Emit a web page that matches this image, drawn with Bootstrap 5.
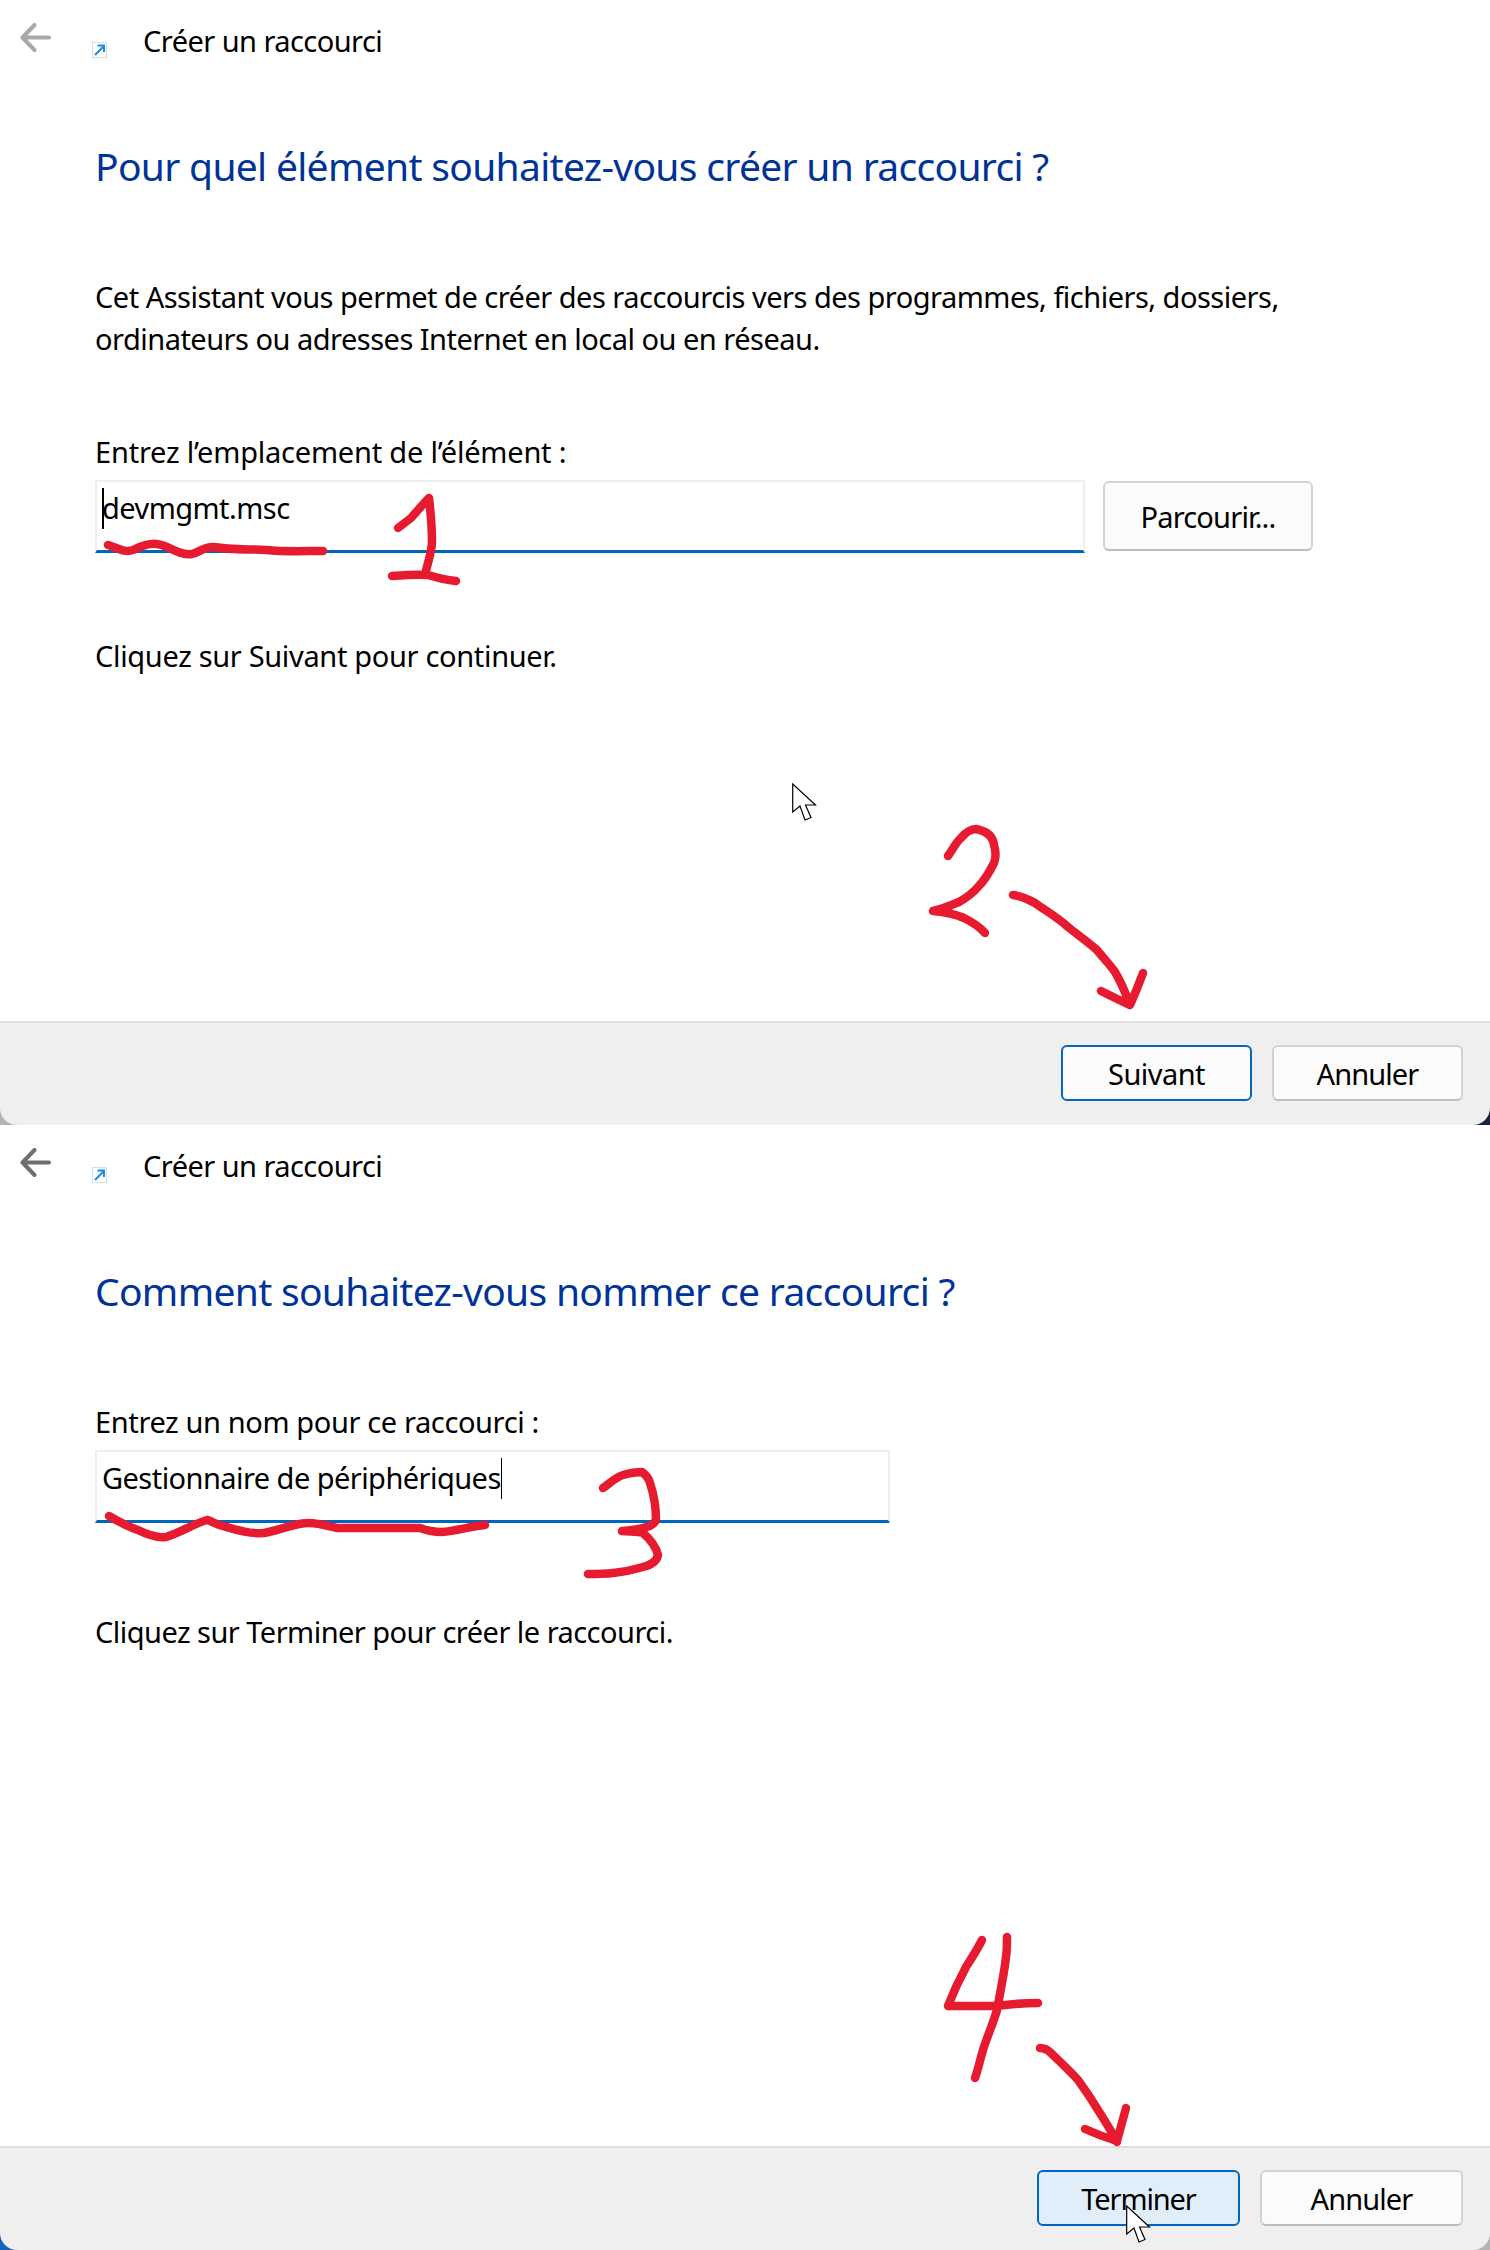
<!doctype html>
<html lang="fr">
<head>
<meta charset="utf-8">
<title>Créer un raccourci</title>
<link href="https://cdn.jsdelivr.net/npm/bootstrap@5.3.0/dist/css/bootstrap.min.css" rel="stylesheet">
<style>
html,body{margin:0;background:#fff}
body{font-family:"Noto Sans","Open Sans","Liberation Sans",sans-serif;color:#000;font-size:29px;line-height:42px;letter-spacing:-.55px;width:1490px}
.wiz-panel{height:1125px;background:linear-gradient(to right,#b4b4b4 50%,#17233f 50%)}
.wiz-panel.wiz-last{background:linear-gradient(to right,#1565c0 50%,#b4b4b4 50%)}
.wiz-main{background:#fff}
.wiz-head{height:82px}
.wiz-arrow{margin-left:20px;margin-top:-7px;width:31px;height:29px;flex:none}
.wiz-sc{margin-left:41px;margin-top:18px;width:15px;height:16px;flex:none}
.wiz-title{margin-left:36px;line-height:42px;margin-top:-1px}
.wiz-body{padding-left:95px}
.wiz-h{font-size:39px;line-height:56px;margin:56px 0 82px;color:#003399;font-weight:400;letter-spacing:-.69px}
.wiz-p{margin:0;letter-spacing:-.51px}
.wiz-lbl{display:block;margin:0 0 7px;padding:0}
.wiz-lbl-a{margin-top:71px;letter-spacing:-.21px}
.wiz-lbl-b{letter-spacing:-.38px}
.wiz-end-a{margin-top:82px;letter-spacing:-.33px}
.wiz-end-b{margin-top:88px;letter-spacing:-.53px}
.wiz-input{height:73px;border:2px solid #eeeeee;border-bottom:3px solid #0067c0;border-radius:0;padding:4.5px 5px 0;background:#fff;font-size:29px;line-height:42px;color:#000;box-shadow:none}
.wiz-input-a{width:990px}
.wiz-input-b{width:795px}
.wiz-caret{display:inline-block;width:1.5px;height:41px;background:#000;vertical-align:-10px;margin:0 -1.5px 0 0}
.wiz-btn{font-size:29px;line-height:42px;color:#000;border-radius:6px;background:#fbfbfb;border:2px solid #d2d2d2;border-bottom-color:#bdbdbd;padding:2px 0 0;letter-spacing:-.55px;height:56px;display:flex;align-items:center;justify-content:center}
.wiz-btn:hover{color:#000;background:#fbfbfb}
.wiz-browse{width:210px;height:70px;margin:1px 0 0 18px;letter-spacing:-.8px}
.wiz-foot{height:104px;background:#efefef;border-top:2px solid #dfdfdf;border-radius:0 0 17px 17px;padding:22px 27px 0 0}
.wiz-primary{border-color:#0067c0;border-bottom-color:#0067c0}
.wiz-w1{width:191px}
.wiz-w2{width:203px}
.wiz-tight{letter-spacing:-.9px}
.wiz-tighter{letter-spacing:-1.1px}
.wiz-hover,.wiz-hover:hover{background:#e0eef9}
.wiz-gap-a{gap:20px}
.wiz-ink{position:absolute;left:0;top:0;width:1490px;height:1125px;pointer-events:none}
.wiz-ink path{fill:none;stroke:#e61b30;stroke-width:8.5;stroke-linecap:round;stroke-linejoin:round}
.wiz-cur{position:absolute;pointer-events:none;width:25px;height:39px}
.wiz-cur-a{left:792px;top:783px}
.wiz-cur-b{left:1126px;top:1080px}
</style>
</head>
<body>
<section class="wiz-panel position-relative d-flex flex-column">
  <div class="wiz-main flex-grow-1">
    <div class="wiz-head d-flex align-items-center">
      <svg class="wiz-arrow" viewBox="0 0 31 29"><path d="M29 14.5H3M14.5 2 2.5 14.5 14.5 27" fill="none" stroke="#a8a8a8" stroke-width="4" stroke-linecap="round" stroke-linejoin="round"/></svg>
      <svg class="wiz-sc" viewBox="0 0 15 16"><rect x=".5" y=".5" width="14" height="15" fill="#fff" stroke="#d5dfe8"/><path d="M3 13 12 4M5.5 3.500H12V10" fill="none" stroke="#1a8ce8" stroke-width="2"/></svg>
      <div class="wiz-title">Créer un raccourci</div>
    </div>
    <div class="wiz-body">
      <h1 class="wiz-h">Pour quel élément souhaitez-vous créer un raccourci ?</h1>
      <p class="wiz-p">Cet Assistant vous permet de créer des raccourcis vers des programmes, fichiers, dossiers,<br>ordinateurs ou adresses Internet en local ou en réseau.</p>
      <label class="wiz-lbl wiz-lbl-a">Entrez l’emplacement de l’élément :</label>
      <div class="d-flex align-items-start">
        <div class="form-control wiz-input wiz-input-a"><span class="wiz-caret"></span>devmgmt.msc</div>
        <button type="button" class="btn wiz-btn wiz-browse">Parcourir...</button>
      </div>
      <p class="wiz-p wiz-end-a">Cliquez sur Suivant pour continuer.</p>
    </div>
  </div>
  <div class="wiz-foot d-flex justify-content-end wiz-gap-a">
    <button type="button" class="btn wiz-btn wiz-primary wiz-w1">Suivant</button>
    <button type="button" class="btn wiz-btn wiz-w1 wiz-tight">Annuler</button>
  </div>
  <svg class="wiz-ink" viewBox="0 0 1490 1125">
    <path d="M108 545C118 548 124 553 133 550C141 546 149 543 157 544C170 546 180 556 192 554C200 552 205 546 214 547C230 550 250 549 266 550C285 552 305 551 323 551"/>
    <path d="M398 528L411 518C419 509 424 503 429 498C431 515 432 530 432 543C431 555 427 565 425 575M392 576C405 575 418 574 428 575C438 578 447 580 456 581"/>
    <path d="M948 856C953 849 956 842 961 838C966 832 971 829 976 829C986 831 993 836 994 845C996 852 996 858 994 863C989 873 984 881 978 887C972 894 966 898 959 902C951 905 943 909 933 911C945 912 955 914 964 918C972 922 979 926 985 933"/>
    <path d="M1013 895C1020 896 1028 899 1035 903C1046 911 1057 917 1068 927C1078 935 1087 941 1097 950C1105 960 1111 966 1115 972C1121 982 1126 994 1130 1005M1101 991C1111 996 1121 1001 1130 1005C1135 994 1139 984 1143 973"/>
  </svg>
  <svg class="wiz-cur wiz-cur-a" viewBox="0 0 25 39"><path d="M.7 1V29L8 23 13 37 19 34.500 13.500 22H23.500Z" fill="#fff" stroke="#000" stroke-width="1.200"/></svg>
</section>
<section class="wiz-panel wiz-last position-relative d-flex flex-column">
  <div class="wiz-main flex-grow-1">
    <div class="wiz-head d-flex align-items-center">
      <svg class="wiz-arrow" viewBox="0 0 31 29"><path d="M29 14.5H3M14.5 2 2.5 14.5 14.5 27" fill="none" stroke="#6e6e6e" stroke-width="4" stroke-linecap="round" stroke-linejoin="round"/></svg>
      <svg class="wiz-sc" viewBox="0 0 15 16"><rect x=".5" y=".5" width="14" height="15" fill="#fff" stroke="#d5dfe8"/><path d="M3 13 12 4M5.5 3.500H12V10" fill="none" stroke="#1a8ce8" stroke-width="2"/></svg>
      <div class="wiz-title">Créer un raccourci</div>
    </div>
    <div class="wiz-body">
      <h1 class="wiz-h">Comment souhaitez-vous nommer ce raccourci ?</h1>
      <label class="wiz-lbl wiz-lbl-b">Entrez un nom pour ce raccourci :</label>
      <div class="form-control wiz-input wiz-input-b">Gestionnaire de périphériques<span class="wiz-caret"></span></div>
      <p class="wiz-p wiz-end-b">Cliquez sur Terminer pour créer le raccourci.</p>
    </div>
  </div>
  <div class="wiz-foot d-flex justify-content-end wiz-gap-a">
    <button type="button" class="btn wiz-btn wiz-primary wiz-hover wiz-w2 wiz-tighter">Terminer</button>
    <button type="button" class="btn wiz-btn wiz-w2 wiz-tight">Annuler</button>
  </div>
  <svg class="wiz-ink" viewBox="0 0 1490 1125">
    <path d="M109 391C118 396 128 402 138 405C148 410 157 413 166 412C180 408 195 398 207 395C212 396 217 400 223 401C237 405 250 409 264 408C280 405 295 398 309 398C318 398 328 401 337 403C365 403 395 403 420 403C428 406 435 407 442 407C456 406 472 401 485 400"/>
    <path d="M603 363C610 358 616 352 623 350C630 348 636 347 642 347C646 350 649 354 650 358C654 370 656 383 656 395C654 399 651 401 647 402C638 404 630 406 622 406C630 407 637 406 643 408C650 414 656 422 658 430C657 436 651 440 643 442C633 445 623 447 613 448C604 449 596 449 588 449"/>
    <path d="M982 815C977 825 971 834 966 842C959 855 953 868 948 881C964 881 980 881 997 881C1011 879 1025 878 1038 878M1007 812C1007 818 1007 825 1006 832C1004 850 1000 868 997 885C993 899 987 912 983 925C980 935 978 945 975 953"/>
    <path d="M1040 923C1044 923 1048 925 1051 928C1060 937 1069 945 1078 955C1086 966 1092 975 1098 985C1105 996 1112 1007 1117 1017M1085 1004C1096 1009 1107 1013 1117 1016C1120 1005 1123 994 1126 983"/>
  </svg>
  <svg class="wiz-cur wiz-cur-b" viewBox="0 0 25 39"><path d="M.7 1V29L8 23 13 37 19 34.500 13.500 22H23.500Z" fill="#fff" stroke="#000" stroke-width="1.200"/></svg>
</section>
<script src="https://cdn.jsdelivr.net/npm/bootstrap@5.3.0/dist/js/bootstrap.bundle.min.js"></script>
</body>
</html>
